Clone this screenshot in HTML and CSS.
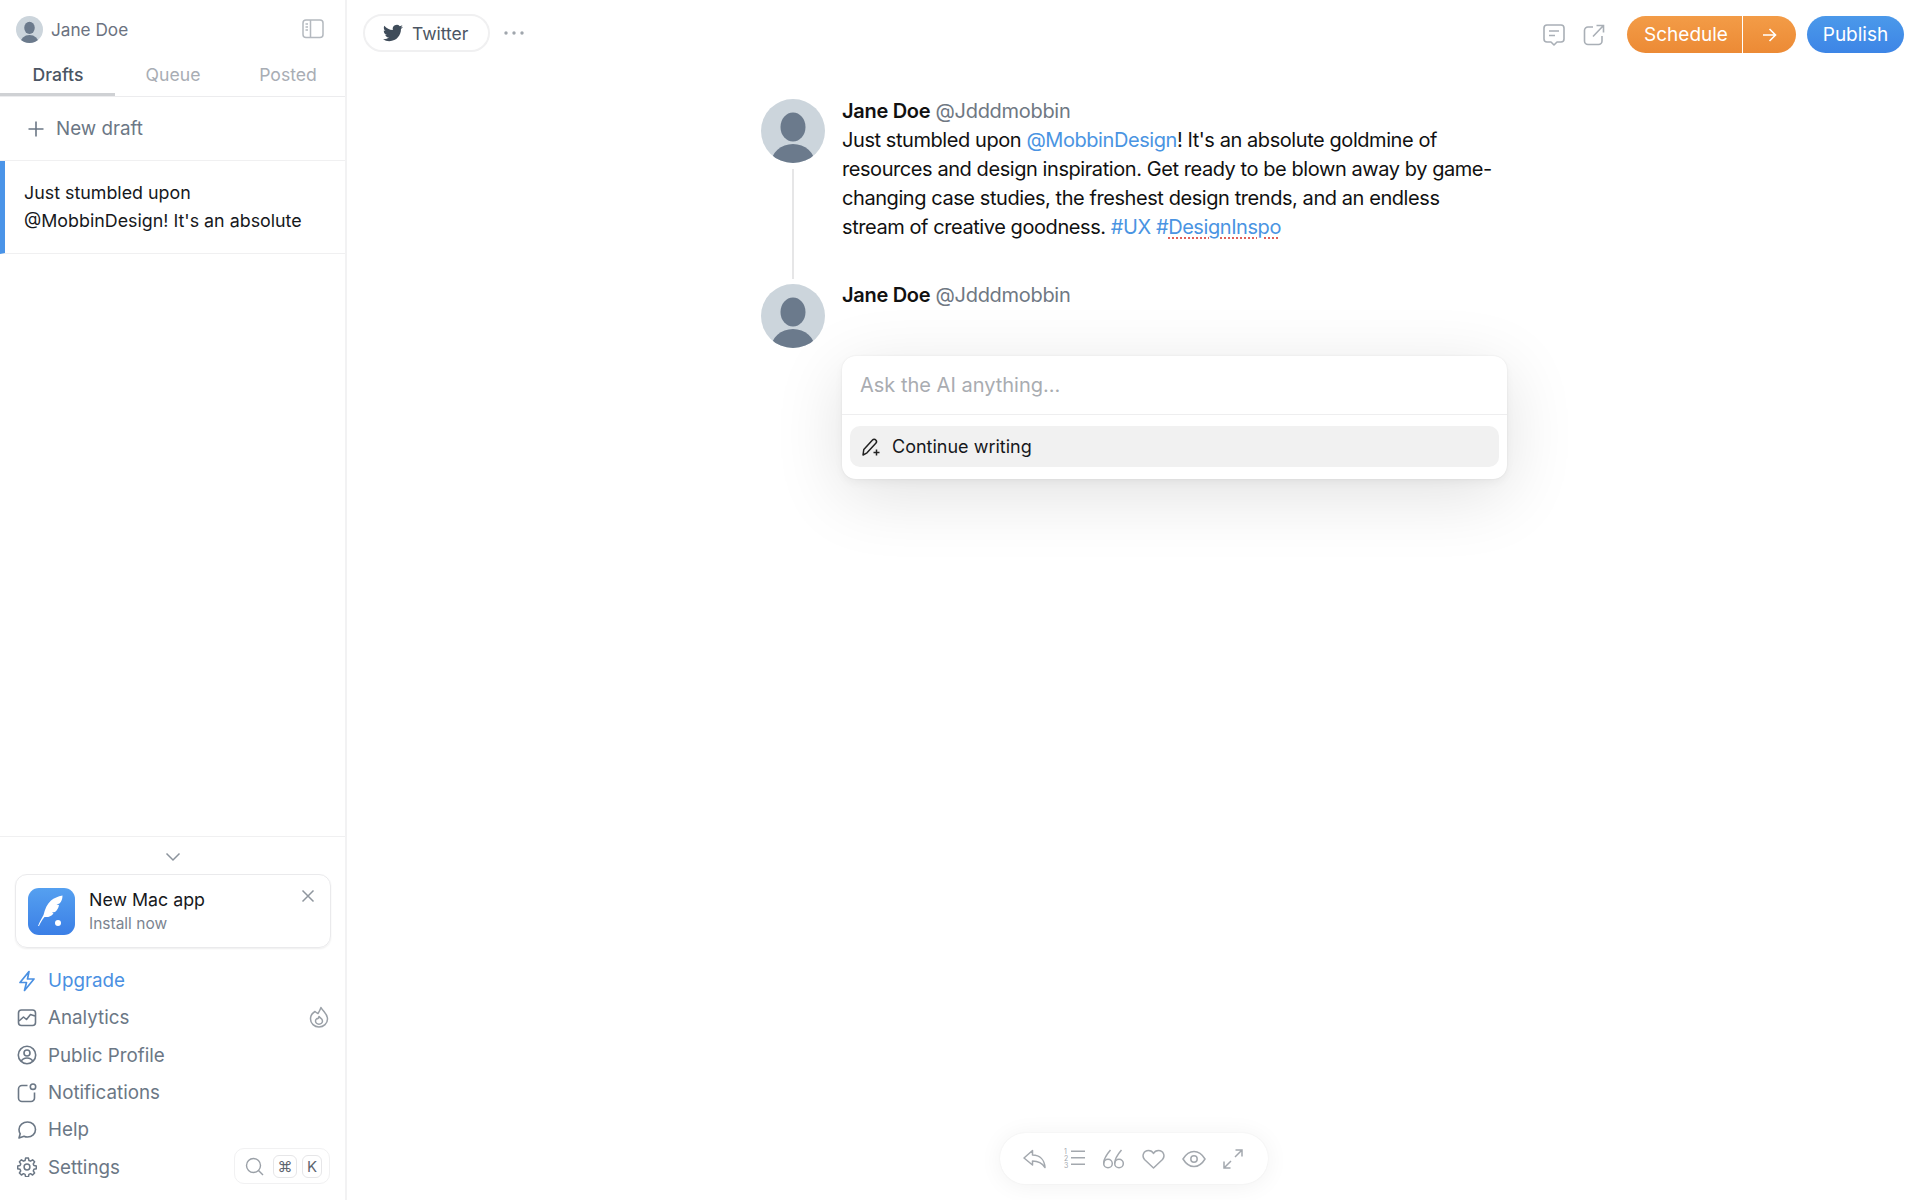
FILE: index.html
```html
<!DOCTYPE html>
<html lang="en">
<head>
  <meta charset="UTF-8" />
  <meta name="viewport" content="width=device-width, initial-scale=1.0"/>
  <title>Drafts</title>
  <link rel="stylesheet" href="styles.css">
</head>
<body>

<svg class="defs" width="0" height="0">
  <symbol id="avatar" viewBox="0 0 64 64">
    <clipPath id="avatar-clip"><circle cx="32" cy="32" r="32"/></clipPath>
    <g clip-path="url(#avatar-clip)">
      <rect width="64" height="64" fill="#ccd5dc"/>
      <ellipse cx="32" cy="28" rx="12.5" ry="14.5" fill="#6b7a8c"/>
      <ellipse cx="32" cy="65" rx="22" ry="20" fill="#6b7a8c"/>
    </g>
  </symbol>
</svg>

<div class="app">
  <aside class="sidebar">
    <div class="user-row">
      <svg class="user-avatar"><use href="#avatar"/></svg>
      <span class="user-name">Jane Doe</span>
      <svg class="panel-icon" width="22" height="20" viewBox="0 0 22 20" fill="none" stroke="#b4b9bf" stroke-width="1.5">
        <rect x="1" y="1" width="20" height="17.5" rx="3"/>
        <path d="M8.500 1v17.500M3.500 5h2.500M3.500 8h2.500M3.500 11h2.500" />
      </svg>
    </div>

    <div class="tabs">
      <div class="tab active">Drafts</div>
      <div class="tab">Queue</div>
      <div class="tab">Posted</div>
    </div>

    <div class="new-draft">
      <svg width="18" height="18" viewBox="0 0 18 18" fill="none" stroke="#6b7785" stroke-width="1.6">
        <path d="M9 1.500v15M1.500 9h15"/>
      </svg>
      New draft
    </div>

    <div class="draft-item">Just stumbled upon<br>@MobbinDesign! It's an absolute</div>

    <div class="side-spacer"></div>

    <div class="side-bottom">
      <div class="collapse">
        <svg width="16" height="10" viewBox="0 0 16 10" fill="none" stroke="#8b939c" stroke-width="1.5">
          <path d="M1.500 1.500L8 8l6.500-6.500"/>
        </svg>
      </div>

      <div class="promo">
        <div class="promo-icon">
          <svg width="47" height="47" viewBox="0 0 47 47" fill="#fff">
            <path d="M10 38C12 33 14 30 15.500 27C17 21 19 16 23 12.500C26 10 30 8.500 34.500 7.500C34.500 11 33.500 13.500 31.500 15.500L28.500 16.500L31 17C30.500 20 29 22.500 27 24L24 24.500L25.500 25.500C23 28.500 20 29.500 16.500 29C14 32 12 35.500 11 38Z"/>
            <circle cx="30" cy="35" r="3"/>
          </svg>
        </div>
        <div class="promo-text">
          <div class="promo-title">New Mac app</div>
          <div class="promo-sub">Install now</div>
        </div>
        <svg class="promo-close" width="14" height="14" viewBox="0 0 14 14" fill="none" stroke="#8f969e" stroke-width="1.5">
          <path d="M1.500 1.500l11 11M12.500 1.500l-11 11"/>
        </svg>
      </div>

      <ul class="side-nav">
        <li class="upgrade">
          <svg width="20" height="22" viewBox="0 0 20 22" fill="none" stroke="#4a90e2" stroke-width="1.7" stroke-linejoin="round">
            <path d="M12 1.500L3 12.500h6.500L7.500 20.500l9.500-11.500h-6.500z"/>
          </svg>
          Upgrade
        </li>
        <li>
          <svg width="20" height="20" viewBox="0 0 20 20" fill="none" stroke="#6b7785" stroke-width="1.6" stroke-linejoin="round">
            <rect x="1.500" y="2" width="17" height="15.500" rx="3"/>
            <path d="M2 13l4.500-4 3 2.500 4-5 4.500 1.500"/>
          </svg>
          Analytics
          <svg class="nav-end" width="20" height="22" viewBox="0 0 20 22" fill="none" stroke="#9aa0a7" stroke-width="1.5" stroke-linejoin="round">
            <path d="M6 5.500C3.500 7 1.500 9.500 1.500 13a8.500 8 0 0 0 17 0C18.500 8 14.500 6 12 1.500C11 4 10 6 9 7.500C8 7 7 6.500 6 5.500z"/>
            <path d="M10 10.500c1 1.500 3.500 2 3.500 4.500a3.500 3.200 0 0 1-7 0c0-1.500 1-2 1.500-2.500 1 .5 1.700-.5 2-2z"/>
          </svg>
        </li>
        <li>
          <svg width="20" height="20" viewBox="0 0 20 20" fill="none" stroke="#6b7785" stroke-width="1.6">
            <circle cx="10" cy="10" r="8.700"/>
            <circle cx="10" cy="8" r="3"/>
            <path d="M4.300 16.200C5.500 13.800 7.500 13 10 13s4.500.8 5.700 3.200"/>
          </svg>
          Public Profile
        </li>
        <li>
          <svg width="20" height="20" viewBox="0 0 20 20" fill="none" stroke="#6b7785" stroke-width="1.6">
            <path d="M10.500 2.500H5A3.500 3.500 0 0 0 1.500 6v9A3.500 3.500 0 0 0 5 18.500h9a3.500 3.500 0 0 0 3.500-3.500V9.500"/>
            <circle cx="16" cy="3.700" r="2.700"/>
          </svg>
          Notifications
        </li>
        <li>
          <svg width="20" height="20" viewBox="0 0 20 20" fill="none" stroke="#6b7785" stroke-width="1.6" stroke-linejoin="round">
            <path d="M10.500 2C15 2 18.500 5.300 18.500 9.500S15 17 10.500 17c-1.300 0-2.500-.3-3.500-.8L2 18l1.200-4.300C2.400 12.500 2 11 2 9.500 2 5.300 6 2 10.500 2z"/>
          </svg>
          Help
        </li>
        <li>
          <svg width="20" height="20" viewBox="0 0 24 24" fill="none" stroke="#6b7785" stroke-width="1.800" stroke-linejoin="round">
            <path d="M10.300 2.300h3.400l.6 2.900 1.900.8 2.500-1.600 2.400 2.400-1.600 2.500.8 1.900 2.900.6v3.400l-2.900.6-.8 1.900 1.600 2.500-2.400 2.400-2.500-1.600-1.900.8-.6 2.900h-3.400l-.6-2.900-1.900-.8-2.500 1.600-2.400-2.400 1.600-2.500-.8-1.900-2.900-.6v-3.400l2.900-.6.8-1.900-1.600-2.500 2.400-2.400 2.500 1.600 1.900-.8z" transform="translate(0 -1)"/>
            <circle cx="12" cy="12" r="3.500"/>
          </svg>
          Settings
          <div class="search-box">
            <svg width="19" height="19" viewBox="0 0 19 19" fill="none" stroke="#9aa0a7" stroke-width="1.400">
              <circle cx="8.500" cy="8.500" r="7"/>
              <path d="M13.500 13.500l4.500 4.500"/>
            </svg>
            <span class="key">⌘</span>
            <span class="key narrow">K</span>
          </div>
        </li>
      </ul>
    </div>
  </aside>

  <main class="main">
    <header class="topbar">
      <div class="channel">
        <svg width="20" height="20" viewBox="0 0 24 24" fill="#3f4c5a">
          <path d="M23.953 4.570a10 10 0 01-2.825.775 4.958 4.958 0 002.163-2.723c-.951.555-2.005.959-3.127 1.184a4.920 4.920 0 00-8.384 4.482C7.690 8.095 4.067 6.130 1.640 3.162a4.822 4.822 0 00-.666 2.475c0 1.710.870 3.213 2.188 4.096a4.904 4.904 0 01-2.228-.616v.060a4.923 4.923 0 003.946 4.827 4.996 4.996 0 01-2.212.085 4.936 4.936 0 004.604 3.417 9.867 9.867 0 01-6.102 2.105c-.390 0-.779-.023-1.170-.067a13.995 13.995 0 007.557 2.209c9.053 0 13.998-7.496 13.998-13.985 0-.210 0-.420-.015-.630A9.935 9.935 0 0024 4.590z"/>
        </svg>
        Twitter
      </div>
      <svg class="more" width="20" height="4" viewBox="0 0 20 4" fill="#a0a6ad">
        <circle cx="2" cy="2" r="1.700"/><circle cx="10" cy="2" r="1.700"/><circle cx="18" cy="2" r="1.700"/>
      </svg>

      <div class="top-actions">
        <svg width="24" height="24" viewBox="0 0 24 24" fill="none" stroke="#a9afb6" stroke-width="1.600" stroke-linejoin="round">
          <path d="M5 2h14a3 3 0 0 1 3 3v11a3 3 0 0 1-3 3h-4l-3 3-3-3H5a3 3 0 0 1-3-3V5a3 3 0 0 1 3-3z"/>
          <path d="M7 8h10M7 12.500h6"/>
        </svg>
        <svg class="share" width="22" height="22" viewBox="0 0 22 22" fill="none" stroke="#a9afb6" stroke-width="1.600">
          <path d="M10 3H5a3.500 3.500 0 0 0-3.500 3.500V17A3.500 3.500 0 0 0 5 20.500h10.500A3.500 3.500 0 0 0 19 17v-5"/>
          <path d="M10 12.500L20 2M13.500 1.500H20.500V8.500"/>
        </svg>
        <div class="schedule-btn">
          <span class="schedule-label">Schedule</span>
          <span class="schedule-arrow">
            <svg width="15" height="14" viewBox="0 0 15 14" fill="none" stroke="#fff" stroke-width="1.600">
              <path d="M1 7h12.500M7.500 1l6 6-6 6"/>
            </svg>
          </span>
        </div>
        <div class="publish-btn">Publish</div>
      </div>
    </header>

    <section class="thread">
      <article class="post">
        <div class="post-side">
          <svg class="post-avatar"><use href="#avatar"/></svg>
          <div class="thread-line"></div>
        </div>
        <div class="post-body">
          <div class="post-head"><b>Jane Doe</b> <span class="handle">@Jdddmobbin</span></div>
          <p class="post-text">Just stumbled upon <span class="link">@MobbinDesign</span>! It's an absolute goldmine of resources and design inspiration. Get ready to be blown away by game-changing case studies, the freshest design trends, and an endless stream of creative goodness. <span class="link">#UX</span> <span class="link">#<span class="typo">DesignInspo</span></span></p>
        </div>
      </article>

      <article class="post second">
        <div class="post-side">
          <svg class="post-avatar"><use href="#avatar"/></svg>
        </div>
        <div class="post-body">
          <div class="post-head"><b>Jane Doe</b> <span class="handle">@Jdddmobbin</span></div>
          <div class="ai-box">
            <div class="ai-input">Ask the AI anything...</div>
            <div class="ai-options">
              <div class="ai-option">
                <svg width="20" height="20" viewBox="0 0 20 20" fill="none" stroke="#222" stroke-width="1.500" stroke-linejoin="round">
                  <path d="M2 18l.8-5.500L11.500 3a2.200 2.200 0 0 1 3.300 0 2.400 2.400 0 0 1 0 3.300L6 15.800z"/>
                  <path d="M15.500 12.500v6M12.500 15.500h6"/>
                </svg>
                Continue writing
              </div>
            </div>
          </div>
        </div>
      </article>
    </section>

    <div class="toolbar">
      <svg width="24" height="20" viewBox="0 0 24 20" fill="none" stroke="#a3a8ae" stroke-width="1.500" stroke-linejoin="round">
        <path d="M9.500 1.500L1 9l8.500 7v-4c5 0 9 1 12.500 6.500C21.500 11 17 6 9.500 6z"/>
      </svg>
      <svg width="22" height="21" viewBox="0 0 22 21" fill="#a3a8ae" stroke="none">
        <text class="list-num" x="0" y="6">1</text>
        <text class="list-num" x="0" y="13">2</text>
        <text class="list-num" x="0" y="20">3</text>
        <rect x="7" y="2.500" width="14" height="1.500"/>
        <rect x="7" y="9" width="14" height="1.500"/>
        <rect x="7" y="15.500" width="14" height="1.500"/>
      </svg>
      <svg width="21" height="20" viewBox="0 0 21 20" fill="none" stroke="#a3a8ae" stroke-width="1.500">
        <circle cx="5" cy="14.500" r="4.300"/><path d="M7.500 1C4 5 .7 9.500 .7 14.500"/>
        <circle cx="16" cy="14.500" r="4.300"/><path d="M18.500 1C15 5 11.700 9.500 11.700 14.500"/>
      </svg>
      <svg width="23" height="20" viewBox="0 0 23 20" fill="none" stroke="#a3a8ae" stroke-width="1.500" stroke-linejoin="round">
        <path d="M11.500 19L2.500 10.500C-.5 7 1.500 1.500 6.500 1.500c2.200 0 4 1 5 3 1-2 2.800-3 5-3 5 0 7 5.500 4 9z"/>
      </svg>
      <svg width="24" height="18" viewBox="0 0 24 18" fill="none" stroke="#a3a8ae" stroke-width="1.500">
        <path d="M1 9c3-5 6.500-7.500 11-7.500S20 4 23 9c-3 5-6.500 7.500-11 7.500S4 14 1 9z"/>
        <circle cx="12" cy="9" r="3.200"/>
      </svg>
      <svg width="20" height="20" viewBox="0 0 20 20" fill="none" stroke="#a3a8ae" stroke-width="1.500">
        <path d="M12 8l7-7M12.500 1h6.500v6.500M8 12l-7 7M1 12.500V19h6.500"/>
      </svg>
    </div>
  </main>
</div>

</body>
</html>
```

FILE: styles.css
```css
* {
  box-sizing: border-box;
}

body {
  margin: 0;
  font-family: Inter, "Noto Sans", sans-serif;
  background: #fff;
  color: #111;
}

.defs {
  position: absolute;
}

svg {
  display: block;
  flex-shrink: 0;
}

.app {
  display: flex;
  height: 1200px;
  overflow: hidden;
}

/* sidebar */

.sidebar {
  width: 347px;
  flex-shrink: 0;
  display: flex;
  flex-direction: column;
  border-right: 2px solid #f2f2f3;
}

.user-row {
  height: 58px;
  display: flex;
  align-items: center;
  padding: 0 16px;
}

.user-avatar {
  width: 27px;
  height: 27px;
}

.user-name {
  margin-left: 8px;
  font-size: 17.200px;
  color: #6b7280;
}

.panel-icon {
  margin-left: auto;
  margin-right: 5px;
}

.tabs {
  display: grid;
  grid-template-columns: repeat(3, 115px);
  height: 39px;
  border-bottom: 1px solid #ececee;
}

.tab {
  padding-left: 1px;
  text-align: center;
  font-size: 17.600px;
  line-height: 34px;
  color: #a8adb4;
}

.tab.active {
  height: 38px;
  color: #4b5563;
  font-weight: 500;
  border-bottom: 3px solid #cfd1d4;
}

.new-draft {
  height: 64px;
  display: flex;
  align-items: center;
  gap: 11px;
  padding-left: 27px;
  font-size: 18.800px;
  color: #6b7785;
  border-bottom: 1px solid #f0f0f1;
}

.draft-item {
  height: 93px;
  padding: 18px 0 0 19px;
  border-left: 5px solid #4a94e8;
  border-bottom: 1px solid #f0f0f1;
  font-size: 17.850px;
  line-height: 27.500px;
  color: #16181c;
}

.side-spacer {
  flex: 1;
}

.side-bottom {
  border-top: 1px solid #f0f0f1;
  padding: 0 14px 15px 15px;
  height: 364px;
}

.collapse {
  height: 37px;
  display: flex;
  align-items: center;
  justify-content: center;
  padding-top: 3px;
}

.promo {
  position: relative;
  height: 74px;
  display: flex;
  align-items: center;
  gap: 14px;
  padding-left: 12px;
  border: 1px solid #eaeaec;
  border-radius: 12px;
  box-shadow: 0 1px 2px rgba(0, 0, 0, 0.07);
}

.promo-icon {
  width: 47px;
  height: 47px;
  border-radius: 11px;
  background: linear-gradient(#55a0f0, #3b7fe6);
}

.promo-title {
  font-size: 17.800px;
  line-height: 26px;
  color: #16181c;
}

.promo-sub {
  font-size: 15.500px;
  line-height: 22px;
  color: #7b8490;
}

.promo-close {
  position: absolute;
  right: 15px;
  top: 14px;
}

.side-nav {
  list-style: none;
  margin: 14px 0 0;
  padding: 0 0 0 2px;
}

.side-nav li {
  position: relative;
  height: 37.300px;
  display: flex;
  align-items: center;
  gap: 11px;
  font-size: 18.800px;
  color: #6b7785;
}

.side-nav li.upgrade {
  color: #4a90e2;
}

.nav-end {
  margin-left: auto;
  margin-right: 2px;
  margin-top: -2px;
}

.search-box {
  position: absolute;
  right: 1px;
  top: 0;
  width: 96px;
  height: 36px;
  display: flex;
  align-items: center;
  gap: 9px;
  padding-left: 10px;
  border: 1px solid #f1f1f2;
  border-radius: 10px;
}

.key {
  width: 24px;
  height: 23px;
  display: flex;
  align-items: center;
  justify-content: center;
  border: 1px solid #e6e6e8;
  border-radius: 6px;
  font-size: 15px;
  color: #5f6670;
}

.key.narrow {
  width: 20px;
  margin-left: -4px;
}

/* main */

.main {
  flex: 1;
  display: flex;
  flex-direction: column;
}

.topbar {
  height: 70px;
  display: flex;
  align-items: flex-start;
  padding: 14px 16px 0 16px;
}

.channel {
  width: 127px;
  height: 38px;
  display: flex;
  align-items: center;
  gap: 9px;
  padding-left: 18px;
  border: 2px solid #f0f0f1;
  border-radius: 19px;
  font-size: 17.500px;
  color: #4b5563;
}

.more {
  margin: 17px 0 0 14px;
}

.top-actions {
  margin-left: auto;
  display: flex;
  align-items: center;
  height: 37px;
  margin-top: 2px;
}

.share {
  margin-left: 17px;
}

.schedule-btn {
  display: flex;
  margin-left: 22px;
  height: 37px;
  border-radius: 19px;
  overflow: hidden;
  color: #fff;
  font-size: 19px;
  background: linear-gradient(#f39c47, #ec8a35);
}

.schedule-label {
  width: 115px;
  line-height: 37px;
  text-align: center;
  padding-left: 3px;
}

.schedule-arrow {
  width: 54px;
  display: flex;
  align-items: center;
  justify-content: center;
  border-left: 1px solid #fff;
}

.publish-btn {
  width: 97px;
  margin-left: 11px;
  height: 37px;
  line-height: 37px;
  text-align: center;
  border-radius: 19px;
  color: #fff;
  font-size: 19px;
  background: linear-gradient(#4b99ea, #3d85e6);
}

.thread {
  flex: 1;
  width: 745px;
  margin: 29px auto 0;
}

.post {
  display: flex;
  gap: 17px;
}

.post-side {
  width: 64px;
  display: flex;
  flex-direction: column;
  align-items: center;
}

.post-avatar {
  width: 64px;
  height: 64px;
}

.thread-line {
  width: 2px;
  height: 110px;
  margin-top: 6px;
  background: #e6e6e7;
}

.post.second {
  margin-top: 5px;
}

.post-body {
  flex: 1;
  margin-top: -1px;
}

.post.second .post-body {
  margin-top: -2px;
}

.post-head {
  font-size: 20px;
  line-height: 26px;
  letter-spacing: -0.300px;
  color: #111;
}

.post-head b {
  font-weight: 600;
}

.handle {
  color: #6f7883;
}

.post-text {
  margin: 2px 0 0;
  font-size: 20px;
  line-height: 29px;
  letter-spacing: -0.430px;
  color: #111;
}

.link {
  color: #4a94e2;
}

.typo {
  text-decoration: underline dotted #e0605a 2px;
  text-underline-offset: 3px;
}

.ai-box {
  margin-top: 48px;
  width: 665px;
  height: 123px;
  border-radius: 14px;
  background: #fff;
  box-shadow: 0 0 2px rgba(0, 0, 0, 0.08), 0 4px 8px rgba(0, 0, 0, 0.04), 0 16px 70px rgba(0, 0, 0, 0.12);
}

.ai-input {
  height: 59px;
  padding-left: 18px;
  font-size: 20px;
  line-height: 59px;
  color: #a9acb1;
  border-bottom: 1px solid #eeeeef;
}

.ai-options {
  padding: 11px 8px 0;
}

.ai-option {
  height: 41px;
  display: flex;
  align-items: center;
  gap: 11px;
  padding-left: 11px;
  border-radius: 10px;
  background: #f1f1f1;
  font-size: 18px;
  color: #16181c;
}

.toolbar {
  align-self: center;
  width: 268px;
  height: 51px;
  margin-bottom: 16px;
  display: flex;
  align-items: center;
  justify-content: space-between;
  padding: 0 24px 0 23px;
  border-radius: 26px;
  background: #fff;
  box-shadow: 0 0 2px rgba(0, 0, 0, 0.06), 0 2px 24px rgba(0, 0, 0, 0.06);
}

.list-num {
  font-size: 7px;
}
```
